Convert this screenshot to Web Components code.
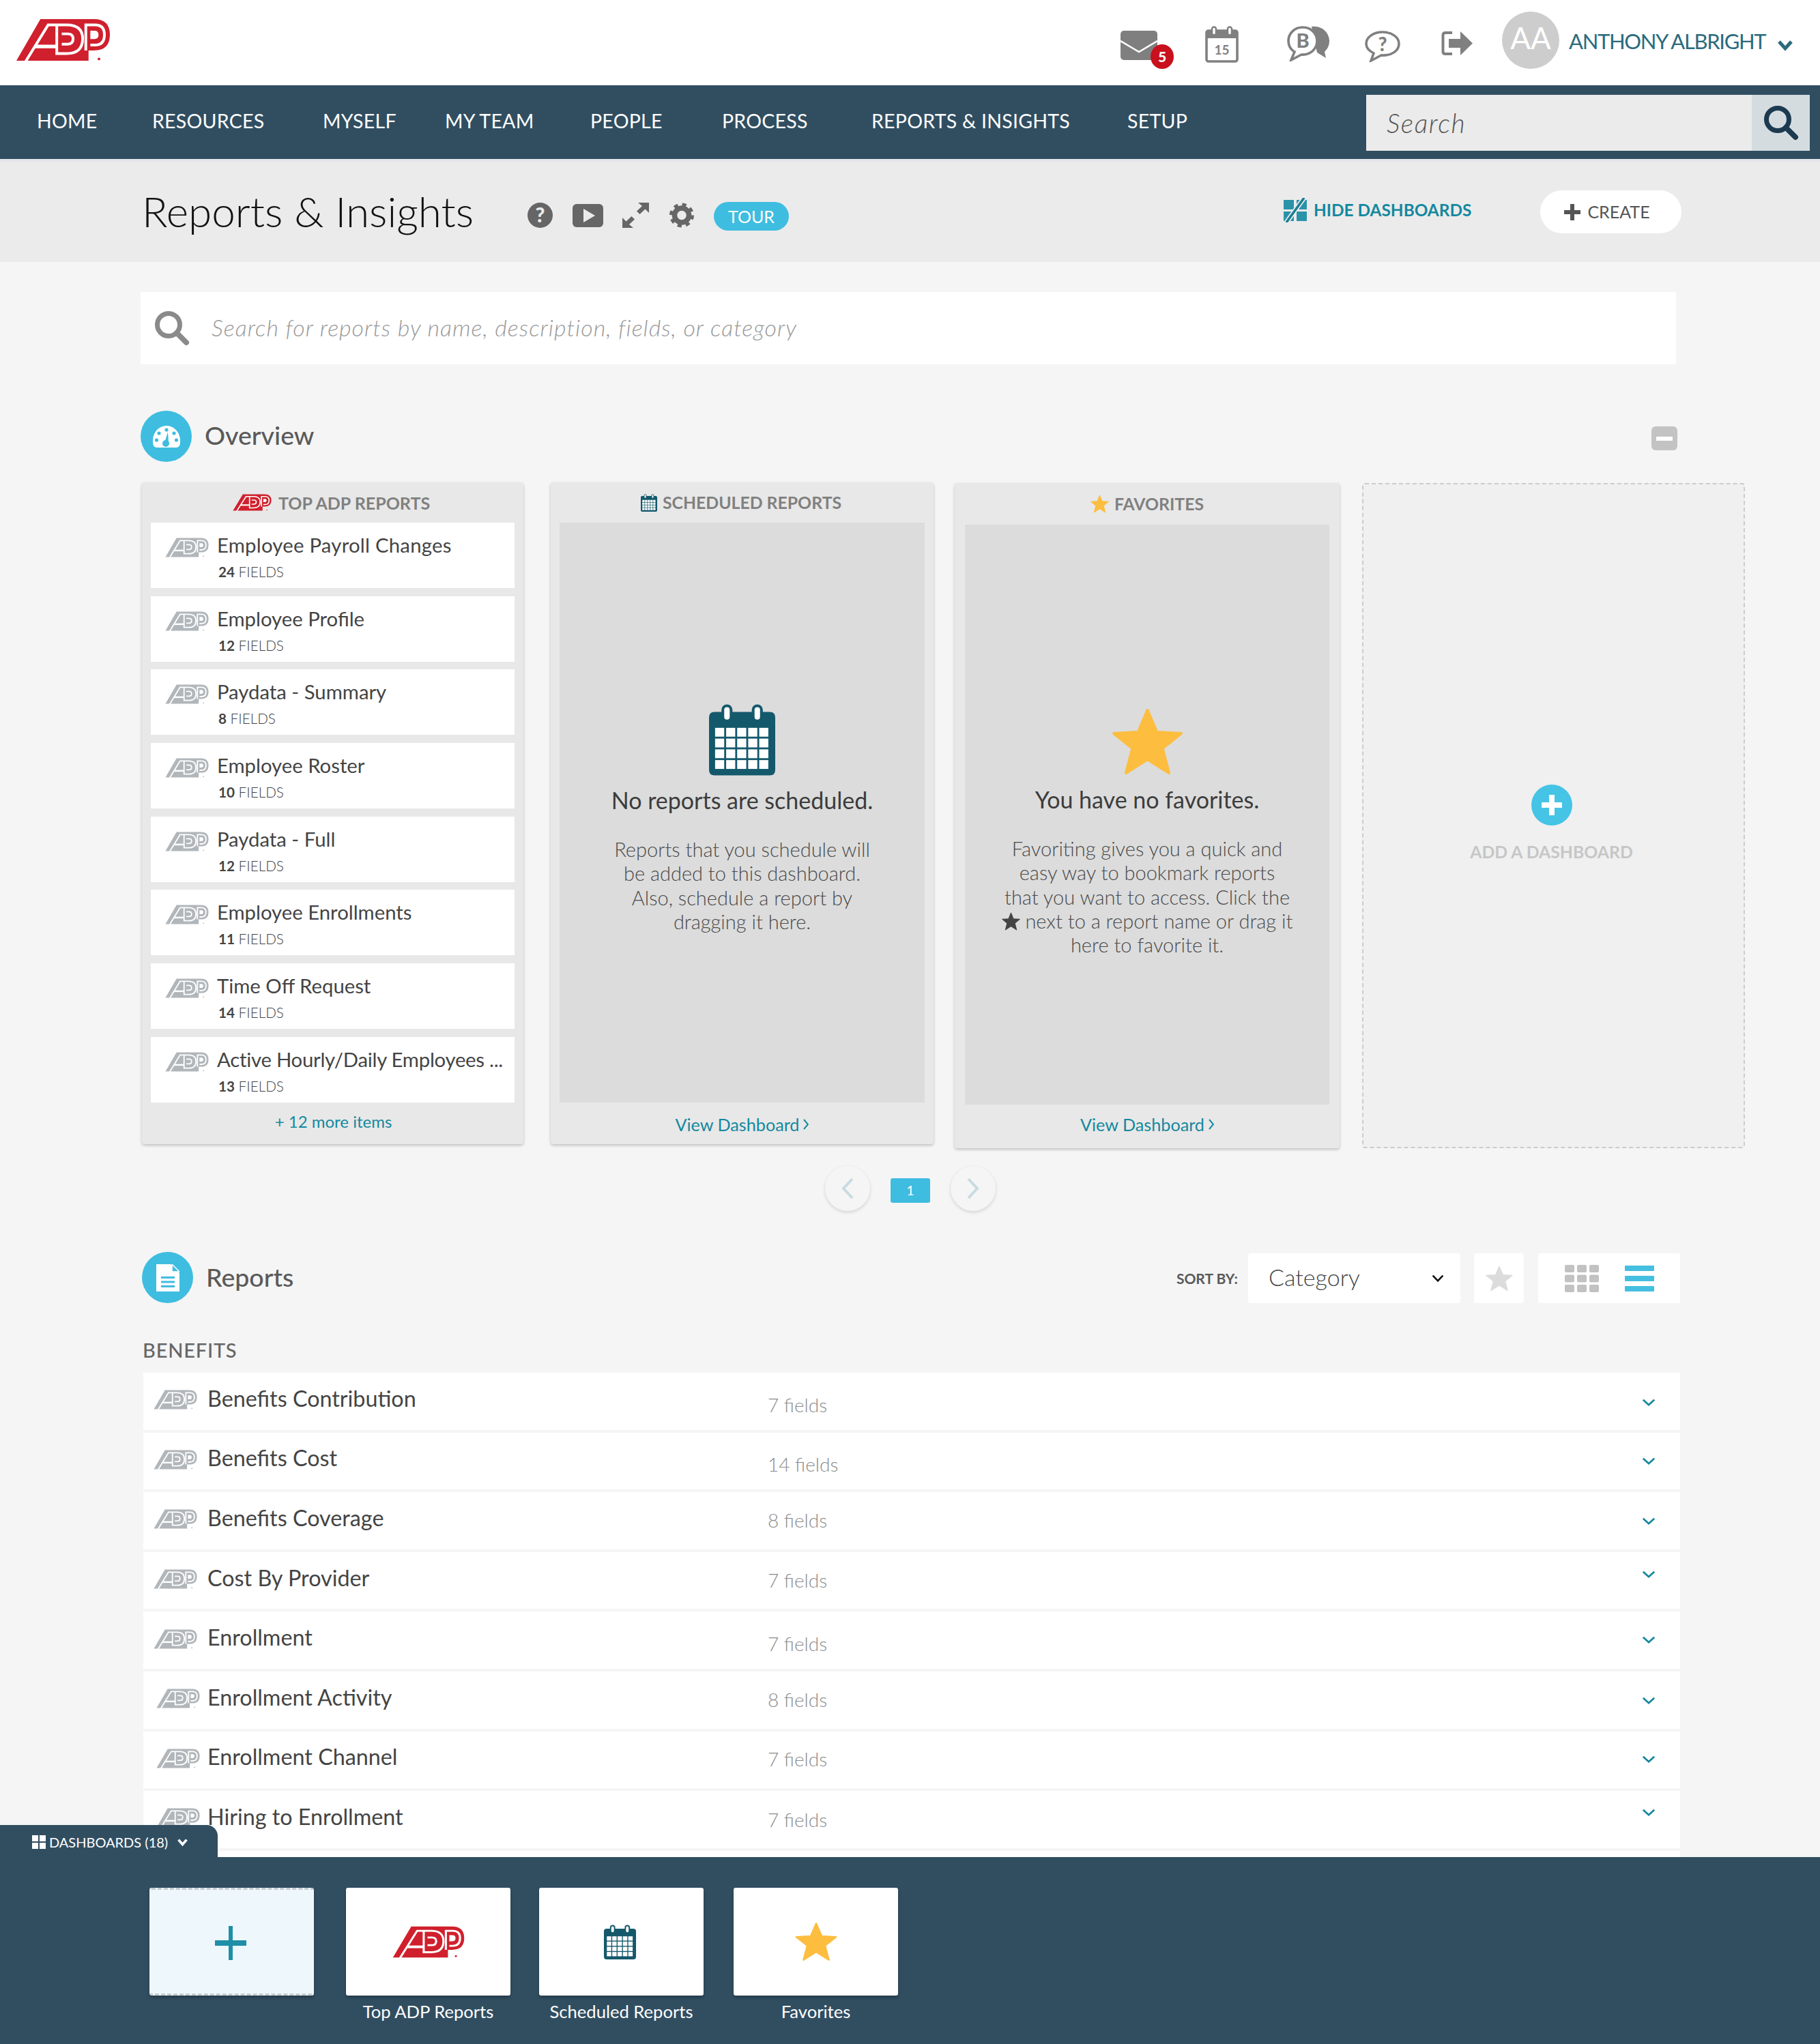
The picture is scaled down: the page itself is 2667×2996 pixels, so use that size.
<!DOCTYPE html>
<html>
<head>
<meta charset="utf-8">
<title>Reports &amp; Insights</title>
<style>
  html, body { margin: 0; padding: 0; }
  body {
    width: 2667px;
    height: 2996px;
    overflow: hidden;
    background: #f5f5f5;
    font-family: Lato, "Open Sans", sans-serif;
    color: #4a4a4a;
  }
  .content { padding-left: 206px; }
  .cards { display: flex; align-items: flex-start; padding-left: 2px; margin-top: 30px; }
</style>
</head>
<body>
<top-bar></top-bar>
<main-nav></main-nav>
<page-head></page-head>

<div class="content">
  <report-search></report-search>
  <section-head icon="gauge" style="margin-top:68px">Overview<collapse-button slot="right"></collapse-button></section-head>

  <div class="cards">
    <top-reports></top-reports>
    <dash-card style="margin-left:40px;width:561px" head="SCHEDULED REPORTS" icon="calendar" h="970" panel-h="850" foot="View Dashboard" inset="13" head-pad="3">
      <empty-state icon="calendar" title="No reports are scheduled.">Reports that you schedule will<br>be added to this dashboard.<br>Also, schedule a report by<br>dragging it here.</empty-state>
    </dash-card>
    <dash-card style="margin:1px 0 0 31px;width:564px" head="FAVORITES" icon="star" h="975" panel-h="850" head-h="61" foot-h="58" foot="View Dashboard" inset="15">
      <empty-state icon="star" title="You have no favorites.">Favoriting gives you a quick and<br>easy way to bookmark reports<br>that you want to access. Click the<br><svg width="27" height="27" viewBox="0 0 100 100" style="vertical-align:-3px"><polygon points="50,4 63,36 97,38 71,60 80,96 50,76 20,96 29,60 3,38 37,36" fill="#444" stroke="#444" stroke-width="4" stroke-linejoin="round"/></svg> next to a report name or drag it<br>here to favorite it.</empty-state>
    </dash-card>
    <add-dashboard style="margin-left:33px"></add-dashboard>
  </div>

  <card-pager></card-pager>

  <section-head icon="doc" style="margin-top:60px;margin-left:2px;width:2254px;--label-top:-2px">Reports<sort-bar slot="right"></sort-bar></section-head>
  <category-label>BENEFITS</category-label>

  <report-list>
    <report-row name="Benefits Contribution" fields="7 fields" fd="5" cd="2"></report-row>
    <report-row name="Benefits Cost" fields="14 fields" fd="5" cd="0"></report-row>
    <report-row name="Benefits Coverage" fields="8 fields" fd="-1" cd="1"></report-row>
    <report-row name="Cost By Provider" fields="7 fields" fd="-1" cd="-9"></report-row>
    <report-row name="Enrollment" fields="7 fields" fd="5" cd="-1"></report-row>
    <report-row name="Enrollment Activity" fields="8 fields" fd="-1" cd="1" lx="4"></report-row>
    <report-row name="Enrollment Channel" fields="7 fields" fd="-1" cd="-1" lx="4"></report-row>
    <report-row name="Hiring to Enrollment" fields="7 fields" fd="0" cd="-10" lx="4"></report-row>
    <report-row></report-row>
  </report-list>
</div>

<dashboard-tray></dashboard-tray>

<script>
  // shared svg bits, the same logo and icons show up all over the page
  const adp = (w, h, color = '#d0202d') => `
    <svg width="${w}" height="${h}" viewBox="25 35 418 192" preserveAspectRatio="none" style="display:block;flex:none">
      <path d="M28 224 L134 38 H370 Q440 38 440 108 Q440 178 370 178 H346 V224Z" fill="${color}"/>
      <g fill="none" stroke="#fff" stroke-width="12">
        <path d="M66 232 L168 64 H206 V192 H250 Q320 192 320 126 Q320 64 250 64 H206"/>
        <path d="M112 160 H206" stroke-width="16"/>
        <path d="M228 104 H254 Q278 104 278 126 Q278 150 254 150 H228"/>
        <path d="M334 178 V64 H374 Q416 64 416 108 Q416 154 374 154 H354"/>
      </g>
      <path d="M354 90 H372 Q390 90 390 108 Q390 127 372 127 H354Z" fill="#fff"/>
      <circle cx="392" cy="216" r="6" fill="${color}"/>
    </svg>`;

  const star = (w, h, color = '#fdbd3f') => `
    <svg width="${w}" height="${h}" viewBox="0 0 100 100" preserveAspectRatio="none" style="display:block;flex:none">
      <polygon points="50,4 63,36 97,38 71,60 80,96 50,76 20,96 29,60 3,38 37,36" fill="${color}" stroke="${color}" stroke-width="4" stroke-linejoin="round"/>
    </svg>`;

  const calendar = (w, h, color = '#14596b') => `
    <svg width="${w}" height="${h}" viewBox="0 0 48 52" style="display:block;flex:none">
      <path d="M4 6 H44 Q48 6 48 10 V48 Q48 52 44 52 H4 Q0 52 0 48 V10 Q0 6 4 6Z" fill="${color}"/>
      <rect x="10" y="1.5" width="6" height="11" rx="3" fill="#fff" stroke="${color}" stroke-width="2"/>
      <rect x="32" y="1.5" width="6" height="11" rx="3" fill="#fff" stroke="${color}" stroke-width="2"/>
      <g fill="#fff">
        ${[0, 1, 2, 3, 4].map(c => [0, 1, 2, 3].map(r => `<rect x="${4.4 + c * 8}" y="${17.5 + r * 7.8}" width="6.6" height="6.4"/>`).join('')).join('')}
      </g>
    </svg>`;

  const chevron = (w, h, color, sw = 3) => `
    <svg width="${w}" height="${h}" viewBox="0 0 ${w} ${h}" style="display:block;flex:none">
      <polyline points="${sw},${sw} ${w / 2},${h - sw} ${w - sw},${sw}" fill="none" stroke="${color}" stroke-width="${sw}"/>
    </svg>`;

  const searchIcon = (size, color) => `
    <svg width="${size}" height="${size}" viewBox="0 0 52 52" style="display:block;flex:none">
      <circle cx="21" cy="21" r="16.5" fill="none" stroke="${color}" stroke-width="7"/>
      <line x1="33" y1="33" x2="47" y2="47" stroke="${color}" stroke-width="8" stroke-linecap="round"/>
    </svg>`;

  class TopBar extends HTMLElement {
    connectedCallback() {
      this.attachShadow({ mode: 'open' }).innerHTML = `
        <style>
          :host { display: flex; align-items: flex-start; height: 125px; background: #fff; position: relative; }
          .logo { margin: 27px 0 0 23px; }
          .tools { margin-left: auto; display: flex; align-items: flex-start; }
          svg { display: block; }
          .mail { position: relative; margin-top: 45px; }
          .badge {
            position: absolute; left: 44px; top: 20px; width: 34px; height: 36px; border-radius: 50%;
            background: #c9101d; color: #fff; font: 900 21px/36px Lato, sans-serif; text-align: center;
          }
          .avatar {
            width: 84px; height: 84px; border-radius: 50%; background: #cdcdcd; color: #fff; margin: 17px 0 0 43px;
            font: 400 44px/76px Lato, sans-serif; text-align: center;
          }
          .name { margin: 42px 0 0 14px; width: 283px; font: 400 31px/36px Lato, sans-serif; letter-spacing: -1.35px; color: #2b6b7d; white-space: nowrap; }
          .caret { margin: 56px 37px 0 20px; }
        </style>
        <div class="logo">${adp(139, 63)}</div>
        <div class="tools">
          <div class="mail">
            <svg width="54" height="43" viewBox="0 0 54 43"><rect width="54" height="43" rx="5" fill="#7f7f7f"/><polyline points="0,15 27,31 54,15" fill="none" stroke="#fff" stroke-width="2.6"/></svg>
            <div class="badge">5</div>
          </div>
          <svg style="margin:38px 0 0 70px" width="49" height="54" viewBox="0 0 49 54">
            <rect x="2" y="7" width="45" height="45" rx="3" fill="#fff" stroke="#808080" stroke-width="3.6"/>
            <rect x="2" y="7" width="45" height="11" fill="#808080"/>
            <rect x="10" y="1.5" width="6" height="12" rx="3" fill="#fff" stroke="#808080" stroke-width="2.6"/><rect x="33" y="1.5" width="6" height="12" rx="3" fill="#fff" stroke="#808080" stroke-width="2.6"/>
            <text x="24.5" y="42" font-family="Lato" font-weight="700" font-size="19" fill="#808080" text-anchor="middle">15</text>
          </svg>
          <svg style="margin:38px 0 0 71px" width="62" height="52" viewBox="0 0 62 52">
            <path d="M36 1 C52 -1 62 11 62 22 C62 30 58 35 55 38 L57 47 L44 39Z" fill="#808080"/>
            <path d="M23 2 C11 2 2 11 2 22 C2 30 6 35 11 38 L6 50 L21 42 C35 43 44 33 44 22 C44 11 35 2 23 2Z" fill="#fff" stroke="#808080" stroke-width="3.6"/>
            <text x="23" y="32" font-family="Lato" font-weight="900" font-size="29" fill="#808080" text-anchor="middle">B</text>
          </svg>
          <svg style="margin:45px 0 0 52px" width="52" height="46" viewBox="0 0 52 46">
            <path d="M26 2 C12 2 2 10 2 19 C2 26 7 30 13 33 L9 44 L24 36 C40 37 50 29 50 19 C50 10 40 2 26 2Z" fill="#fff" stroke="#808080" stroke-width="3.6"/>
            <text x="26" y="30" font-family="Lato" font-weight="900" font-size="28" fill="#808080" text-anchor="middle">?</text>
          </svg>
          <svg style="margin:45px 0 0 60px" width="46" height="37" viewBox="0 0 46 37">
            <path d="M16 3 H6 Q2.5 3 2.5 6.5 V30.5 Q2.5 34 6 34 H16" fill="none" stroke="#808080" stroke-width="4"/>
            <path d="M11 12 H28 V1 L46 18.5 L28 36 V25 H11Z" fill="#808080"/>
          </svg>
          <div class="avatar">AA</div>
          <div class="name">ANTHONY ALBRIGHT</div>
          <div class="caret">${chevron(28, 20, '#2b6b7d', 5)}</div>
        </div>`;
    }
  }

  class MainNav extends HTMLElement {
    get items() {
      return [['HOME', 169], ['RESOURCES', 250], ['MYSELF', 179], ['MY TEAM', 213], ['PEOPLE', 193], ['PROCESS', 219], ['REPORTS &amp; INSIGHTS', 375], ['SETUP', 350]];
    }

    connectedCallback() {
      this.attachShadow({ mode: 'open' }).innerHTML = `
        <style>
          :host { display: flex; height: 108px; background: #314e61; padding-left: 54px; }
          a { font: 400 28.5px/108px Lato, sans-serif; letter-spacing: .25px; color: #fff; display: block; margin-top: -2px; white-space: nowrap; }
          .search { display: flex; width: 650px; height: 82px; margin-top: 14px; background: #ebebeb; }
          .search span { flex: 1; padding-left: 30px; font: italic 300 39px/82px Lato, sans-serif; letter-spacing: 1.6px; color: #555; }
          .search div { width: 85px; background: #d5dce0; display: flex; align-items: center; justify-content: center; }
        </style>
        ${this.items.map(([label, w]) => `<a style="width:${w}px">${label}</a>`).join('')}
        <div class="search"><span>Search</span><div>${searchIcon(52, '#1c3a50')}</div></div>`;
    }
  }

  class PageHead extends HTMLElement {
    connectedCallback() {
      this.attachShadow({ mode: 'open' }).innerHTML = `
        <style>
          :host { display: flex; align-items: flex-start; height: 147px; background: #ebebeb; border-top: 4px solid #e3e5e9; padding-left: 208px; color: #111; }
          h1 { margin: 37px 0 0; width: 565px; font: 300 62px/70px Lato, sans-serif; white-space: nowrap; }
          svg { display: block; flex: none; }
          .tour {
            margin: 59px 0 0 29px; width: 110px; height: 42px; border-radius: 21px; background: #3ebde0; color: #fff;
            font: 400 25px/42px Lato, sans-serif; text-align: center;
          }
          .hide { margin: 53px 0 0 723px; display: flex; align-items: center; font: 700 24.4px/36px Lato, sans-serif; color: #14889f; width: 378px; white-space: nowrap; }
          .hide svg { margin-right: 8px; }
          .create {
            margin-top: 42px; width: 207px; height: 63px; padding-right: 11px; box-sizing: border-box; background: #fff; border-radius: 32px; display: flex; align-items: center; justify-content: center;
            font: 400 25px/63px Lato, sans-serif; color: #555; gap: 10px;
          }
        </style>
        <h1>Reports &amp; Insights</h1>
        <svg style="margin-top:60px" width="37" height="37" viewBox="0 0 37 37"><circle cx="18.5" cy="18.5" r="18.5" fill="#666"/><text x="18.5" y="29" font-family="Lato" font-weight="900" font-size="30" fill="#ebebeb" text-anchor="middle">?</text></svg>
        <svg style="margin:62px 0 0 29px" width="45" height="34" viewBox="0 0 45 34"><rect width="45" height="34" rx="6" fill="#666"/><polygon points="16,7 33,17 16,27" fill="#ebebeb"/></svg>
        <svg style="margin:60px 0 0 28px" width="39" height="37" viewBox="0 0 39 37"><g fill="#666"><path d="M23 0 H39 V15 L33.500 9.500 L25.500 17 L21 12.500 L29 5Z"/><path d="M16 37 H0 V22 L5.500 27.500 L13.500 20 L18 24.500 L10 32Z"/></g></svg>
        <svg style="margin:60px 0 0 30px" width="36" height="37" viewBox="0 0 36 37"><circle cx="18" cy="18.5" r="10.5" fill="none" stroke="#666" stroke-width="7.5"/><circle cx="18" cy="18.5" r="15.5" fill="none" stroke="#666" stroke-width="5" stroke-dasharray="6 6.2"/></svg>
        <div class="tour">TOUR</div>
        <div class="hide">
          <svg width="38" height="36" viewBox="0 0 38 36"><g fill="#2a93a9"><rect x="2" y="3" width="15" height="14"/><rect x="21" y="3" width="15" height="14"/><rect x="2" y="20" width="15" height="14"/><rect x="21" y="20" width="15" height="14"/></g><line x1="32" y1="0" x2="6" y2="36" stroke="#ebebeb" stroke-width="7"/><line x1="32" y1="0" x2="6" y2="36" stroke="#1a7e94" stroke-width="3.5"/></svg>
          HIDE DASHBOARDS
        </div>
        <div class="create"><svg width="24" height="24" viewBox="0 0 24 24"><path d="M9 0 H15 V9 H24 V15 H15 V24 H9 V15 H0 V9 H9Z" fill="#555"/></svg>CREATE</div>`;
    }
  }

  class ReportSearch extends HTMLElement {
    connectedCallback() {
      this.attachShadow({ mode: 'open' }).innerHTML = `
        <style>
          :host { display: flex; align-items: center; width: 2250px; height: 106px; margin-top: 44px; background: #fff; padding-left: 20px; box-sizing: border-box; gap: 32px; }
          span { font: italic 300 34px/40px Lato, sans-serif; letter-spacing: 1px; color: #999; margin-top: -2px; }
        </style>
        ${searchIcon(52, '#8a8a8a')}
        <span>Search for reports by name, description, fields, or category</span>`;
    }
  }

  class SectionHead extends HTMLElement {
    get icon() {
      if (this.getAttribute('icon') === 'gauge') {
        return `<svg width="40" height="32" viewBox="0 0 40 32"><path d="M0 24 C-1 10 9 0 20 0 C31 0 41 10 40 24 Q40 32 34 32 H6 Q0 32 0 24Z" fill="#fff"/><g fill="#3ebde0"><circle cx="20" cy="6" r="2.6"/><circle cx="9" cy="11" r="2.6"/><circle cx="31" cy="11" r="2.6"/><circle cx="5.5" cy="21" r="2.6"/><circle cx="34.5" cy="21" r="2.6"/><circle cx="19" cy="26" r="5"/><path d="M17 25 L22 9 L23 25Z"/></g></svg>`;
      }
      return `<svg width="34" height="40" viewBox="0 0 34 40"><path d="M0 0 H21 L34 13 V40 H0Z" fill="#fff"/><path d="M23 0 L34 11 H23Z" fill="#3ebde0" stroke="#fff" stroke-width="1.5"/><g fill="#3ebde0"><rect x="7" y="18" width="20" height="3"/><rect x="7" y="24.5" width="20" height="3"/><rect x="7" y="31" width="20" height="3"/></g></svg>`;
    }

    connectedCallback() {
      this.attachShadow({ mode: 'open' }).innerHTML = `
        <style>
          :host { display: flex; align-items: center; height: 75px; width: 2252px; }
          .dot { width: 75px; height: 75px; border-radius: 50%; background: #3ebde0; display: flex; align-items: center; justify-content: center; flex: none; }
          .label { margin: var(--label-top, -4px) 0 0 19px; font: 500 37.5px/46px Lato, sans-serif; color: #5a5a5a; }
          .right { margin-left: auto; }
        </style>
        <div class="dot">${this.icon}</div>
        <div class="label"><slot></slot></div>
        <div class="right"><slot name="right"></slot></div>`;
    }
  }

  class CollapseButton extends HTMLElement {
    connectedCallback() {
      this.attachShadow({ mode: 'open' }).innerHTML = `
        <style>
          :host { display: flex; align-items: center; justify-content: center; width: 38px; height: 35px; border-radius: 6px; background: #c3c3c3; margin-top: 6px; }
          div { width: 24px; height: 6px; background: #fff; }
        </style>
        <div></div>`;
    }
  }

  class TopReports extends HTMLElement {
    get reports() {
      return [
        ['Employee Payroll Changes', 24, .25], ['Employee Profile', 12], ['Paydata - Summary', 8], ['Employee Roster', 10],
        ['Paydata - Full', 12], ['Employee Enrollments', 11], ['Time Off Request', 14], ['Active Hourly/Daily Employees ...', 13, -.25]
      ];
    }

    connectedCallback() {
      this.attachShadow({ mode: 'open' }).innerHTML = `
        <style>
          :host { display: block; width: 559px; height: 970px; box-sizing: border-box; padding: 0 13px; background: #e8e8e8; border-radius: 4px; box-shadow: 0 2px 4px rgba(0,0,0,.22); }
          .head { height: 59px; padding-right: 4px; box-sizing: border-box; display: flex; align-items: center; justify-content: center; gap: 10px; font: 700 25px/30px Lato, sans-serif; color: #808080; }
          .list { display: flex; flex-direction: column; gap: 11.7px; }
          .more { text-align: center; font: 400 24px/30px Lato, sans-serif; color: #14889f; margin-top: 13px; padding-left: 2px; }
        </style>
        <div class="head">${adp(57, 25)}TOP ADP REPORTS</div>
        <div class="list">${this.reports.map(([n, f, ls]) => `<report-tile name="${n}" fields="${f}" style="letter-spacing:${ls || 0}px"></report-tile>`).join('')}</div>
        <div class="more">+ 12 more items</div>`;
    }
  }

  class ReportTile extends HTMLElement {
    connectedCallback() {
      this.attachShadow({ mode: 'open' }).innerHTML = `
        <style>
          :host { display: flex; height: 96px; background: #fff; padding-left: 21px; box-sizing: border-box; }
          .logo { margin: 22px 12px 0 0; }
          .name { margin-top: 15px; font: 400 29.3px/36px Lato, sans-serif; color: #444; white-space: nowrap; }
          .sub { margin: 7px 0 0 2px; font: 300 20.7px/28px Lato, sans-serif; letter-spacing: 0; color: #444; }
          b { font-weight: 700; }
        </style>
        <div class="logo">${adp(64, 29, '#b1b6ba')}</div>
        <div>
          <div class="name">${this.getAttribute('name')}</div>
          <div class="sub"><b>${this.getAttribute('fields')}</b> FIELDS</div>
        </div>`;
    }
  }

  class DashCard extends HTMLElement {
    connectedCallback() {
      const icon = this.getAttribute('icon') === 'star' ? star(27, 27) : calendar(24, 26);
      const headH = this.getAttribute('head-h') || 59;
      const footH = this.getAttribute('foot-h');
      this.attachShadow({ mode: 'open' }).innerHTML = `
        <style>
          :host { display: block; height: ${this.getAttribute('h')}px; background: #e8e8e8; border-radius: 4px; box-shadow: 0 2px 4px rgba(0,0,0,.22); }
          .head { height: ${headH}px; padding-right: ${this.getAttribute('head-pad') || 0}px; box-sizing: border-box; display: flex; align-items: center; justify-content: center; gap: 8px; font: 700 24.8px/30px Lato, sans-serif; color: #808080; }
          .panel { height: ${this.getAttribute('panel-h')}px; margin: 0 ${this.getAttribute('inset')}px; background: #dcdcdc; }
          .foot { display: flex; align-items: center; justify-content: center; gap: 6px; height: ${footH || 64}px; box-sizing: border-box; font: 400 25.2px/30px Lato, sans-serif; color: #14889f; }
        </style>
        <div class="head">${icon}${this.getAttribute('head')}</div>
        <div class="panel"><slot></slot></div>
        <div class="foot">${this.getAttribute('foot')}
          <svg width="8" height="16" viewBox="0 0 8 16"><polyline points="1,1 7,8 1,15" fill="none" stroke="#14889f" stroke-width="2"/></svg>
        </div>`;
    }
  }

  class EmptyState extends HTMLElement {
    connectedCallback() {
      const isStar = this.getAttribute('icon') === 'star';
      this.attachShadow({ mode: 'open' }).innerHTML = `
        <style>
          :host { display: flex; flex-direction: column; align-items: center; text-align: center; padding-top: ${isStar ? 268 : 265}px; }
          h3 { margin: ${isStar ? 15 : 16}px 0 0; font: 400 34px/40px Lato, sans-serif; color: #3c3c3c; }
          p { margin: 34px 0 0; font: 300 29px/35.3px Lato, sans-serif; color: #4a4a4a; white-space: nowrap; }
        </style>
        ${isStar ? star(105, 100) : calendar(97, 106)}
        <h3>${this.getAttribute('title')}</h3>
        <p><slot></slot></p>`;
    }
  }

  class AddDashboard extends HTMLElement {
    connectedCallback() {
      this.attachShadow({ mode: 'open' }).innerHTML = `
        <style>
          :host { display: flex; flex-direction: column; align-items: center; width: 561px; height: 975px; box-sizing: border-box; padding-top: 440px; background: #f0f0f0; border: 2px dashed #ccc; border-radius: 4px; margin-top: 1px; }
          .plus { width: 60px; height: 60px; border-radius: 50%; background: #45c4e5; display: flex; align-items: center; justify-content: center; margin-left: -6px; }
          .label { margin: 21px 0 0 -6px; font: 700 24.8px/36px Lato, sans-serif; color: #c6c6c6; }
        </style>
        <div class="plus"><svg width="34" height="34" viewBox="0 0 34 34"><path d="M13 2 H21 V13 H32 V21 H21 V32 H13 V21 H2 V13 H13Z" fill="#fff"/></svg></div>
        <div class="label">ADD A DASHBOARD</div>`;
    }
  }

  class CardPager extends HTMLElement {
    connectedCallback() {
      this.attachShadow({ mode: 'open' }).innerHTML = `
        <style>
          :host { display: flex; align-items: center; height: 67px; margin-top: 25px; padding-left: 1003px; }
          .arrow { width: 66px; height: 66px; border-radius: 50%; background: #f5f5f5; box-shadow: 0 2px 5px rgba(0,0,0,.14); display: flex; align-items: center; justify-content: center; }
          .page { width: 58px; height: 36px; margin: 6px 30px 0; border-radius: 3px; background: #3ebde0; color: #fff; font: 400 19px/36px Lato, sans-serif; text-align: center; }
        </style>
        <div class="arrow"><svg width="20" height="32" viewBox="0 0 20 32"><polyline points="17,2 4,16 17,30" fill="none" stroke="#c8dbe2" stroke-width="4"/></svg></div>
        <div class="page">1</div>
        <div class="arrow"><svg width="20" height="32" viewBox="0 0 20 32"><polyline points="3,2 16,16 3,30" fill="none" stroke="#c8dbe2" stroke-width="4"/></svg></div>`;
    }
  }

  class SortBar extends HTMLElement {
    connectedCallback() {
      const dots = [0, 1, 2].map(r => [0, 1, 2].map(c => `<rect x="${c * 18}" y="${r * 14.5}" width="14" height="11" rx="2" fill="#c2c2c2"/>`).join('')).join('');
      this.attachShadow({ mode: 'open' }).innerHTML = `
        <style>
          :host { display: flex; align-items: center; height: 73px; margin-top: 2px; }
          .label { font: 700 21px/30px Lato, sans-serif; color: #5a5a5a; margin-right: 15px; }
          .box { background: #fff; border-radius: 4px; height: 73px; display: flex; align-items: center; box-sizing: border-box; }
          .select { width: 311px; padding: 0 23px 0 30px; justify-content: space-between; font: 300 34px/69px Lato, sans-serif; color: #444; }
          .select span { margin-top: -4px; }
          .star { width: 73px; margin-left: 20px; justify-content: center; }
          .view { width: 208px; margin-left: 21px; padding-left: 39px; gap: 38px; }
        </style>
        <div class="label">SORT BY:</div>
        <div class="box select"><span>Category</span> ${chevron(20, 13, '#111', 2.6)}</div>
        <div class="box star">${star(40, 38, '#dcdcdc')}</div>
        <div class="box view">
          <svg width="50" height="40" viewBox="0 0 50 40" style="display:block">${dots}</svg>
          <svg width="43" height="38" viewBox="0 0 43 38" style="display:block"><g fill="#45bfe0"><rect width="43" height="8" rx="1"/><rect y="15" width="43" height="8" rx="1"/><rect y="30" width="43" height="8" rx="1"/></g></svg>
        </div>`;
    }
  }

  class CategoryLabel extends HTMLElement {
    connectedCallback() {
      this.attachShadow({ mode: 'open' }).innerHTML = `
        <style>
          :host { display: block; margin: 52px 0 0 3px; height: 50px; font: 500 29px/34px Lato, sans-serif; letter-spacing: .8px; color: #666; }
        </style>
        <slot></slot>`;
    }
  }

  class ReportList extends HTMLElement {
    connectedCallback() {
      this.attachShadow({ mode: 'open' }).innerHTML = `
        <style>
          :host { display: flex; flex-direction: column; gap: 4px; width: 2252px; margin-left: 4px; }
        </style>
        <slot></slot>`;
    }
  }

  class ReportRow extends HTMLElement {
    connectedCallback() {
      const name = this.getAttribute('name');
      const num = k => Number(this.getAttribute(k)) || 0;
      this.attachShadow({ mode: 'open' }).innerHTML = `
        <style>
          :host { display: grid; grid-template-columns: 94px 821px 1fr 57px; align-items: center; height: 83.6px; background: #fff; }
          .logo { padding-left: ${15 + num('lx')}px; margin-top: -4px; }
          .name { font: 400 32.3px/40px Lato, sans-serif; color: #444; margin-top: -8px; white-space: nowrap; }
          .fields { font: 300 28px/34px Lato, sans-serif; color: #8a8a8a; margin-top: ${num('fd') * 2}px; }
          .caret { margin-top: ${num('cd') * 2}px; }
        </style>
        ${name ? `
          <div class="logo">${adp(64, 29, '#b1b6ba')}</div>
          <div class="name">${name}</div>
          <div class="fields">${this.getAttribute('fields')}</div>
          <div class="caret">${chevron(22, 13, '#14889f', 2.8)}</div>` : ''}`;
    }
  }

  class DashboardTray extends HTMLElement {
    connectedCallback() {
      this.attachShadow({ mode: 'open' }).innerHTML = `
        <style>
          :host { display: block; position: fixed; left: 0; bottom: 0; width: 100%; height: 274px; background: #314e61; }
          .tab {
            position: absolute; left: 0; top: -47px; width: 319px; height: 47px; background: #314e61; border-radius: 0 16px 0 0;
            display: flex; align-items: center; padding: 2px 0 0 47px; box-sizing: border-box; color: #fff; font: 400 20px/30px Lato, sans-serif; white-space: nowrap;
          }
          .tab svg:first-child { margin-right: 5px; }
          .tab svg:last-child { margin-left: 12px; }
          .row { display: flex; padding: 45px 0 0 219px; }
          tray-tile + tray-tile { margin-left: 47px; }
        </style>
        <div class="tab">
          <svg width="20" height="20" viewBox="0 0 20 20"><g fill="#fff"><rect width="9" height="9"/><rect x="11" width="9" height="9"/><rect y="11" width="9" height="9"/><rect x="11" y="11" width="9" height="9"/></g></svg>
          DASHBOARDS (18)
          ${chevron(19, 14, '#fff', 3.6)}
        </div>
        <div class="row">
          <tray-tile kind="add"></tray-tile>
          <tray-tile kind="adp" label="Top ADP Reports"></tray-tile>
          <tray-tile kind="calendar" label="Scheduled Reports" style="margin-left:42px"></tray-tile>
          <tray-tile kind="star" label="Favorites" style="margin-left:44px"></tray-tile>
        </div>`;
    }
  }

  class TrayTile extends HTMLElement {
    get art() {
      switch (this.getAttribute('kind')) {
        case 'add':
          return `<svg style="margin:4px 4px 0 0" width="46" height="50" viewBox="0 0 46 50"><rect x="20" width="6" height="50" fill="#1f8fa8"/><rect y="21" width="46" height="8" fill="#1f8fa8"/></svg>`;
        case 'adp':
          return adp(106, 47);
        case 'calendar':
          return `<div style="margin-right:5px">${calendar(49, 51)}</div>`;
        default:
          return star(62, 58);
      }
    }

    connectedCallback() {
      const add = this.getAttribute('kind') === 'add';
      this.attachShadow({ mode: 'open' }).innerHTML = `
        <style>
          :host { display: block; width: 241px; }
          .tile {
            height: 158px; box-sizing: border-box; border-radius: 3px; display: flex; align-items: center; justify-content: center;
            background: ${add ? '#eef7fc' : '#fff'}; box-shadow: 0 3px 4px rgba(0,0,0,.25);
            ${add ? 'border-top: 3px dashed #c6ccd0; border-bottom: 3px dashed #c6ccd0;' : ''}
          }
          .label { text-align: center; color: #fff; font: 400 25.6px/30px Lato, sans-serif; margin-top: 8px; white-space: nowrap; }
        </style>
        <div class="tile">${this.art}</div>
        <div class="label">${this.getAttribute('label') || ''}</div>`;
    }
  }

  customElements.define('top-bar', TopBar);
  customElements.define('main-nav', MainNav);
  customElements.define('page-head', PageHead);
  customElements.define('report-search', ReportSearch);
  customElements.define('section-head', SectionHead);
  customElements.define('collapse-button', CollapseButton);
  customElements.define('top-reports', TopReports);
  customElements.define('report-tile', ReportTile);
  customElements.define('dash-card', DashCard);
  customElements.define('empty-state', EmptyState);
  customElements.define('add-dashboard', AddDashboard);
  customElements.define('card-pager', CardPager);
  customElements.define('sort-bar', SortBar);
  customElements.define('category-label', CategoryLabel);
  customElements.define('report-list', ReportList);
  customElements.define('report-row', ReportRow);
  customElements.define('dashboard-tray', DashboardTray);
  customElements.define('tray-tile', TrayTile);
</script>
</body>
</html>
